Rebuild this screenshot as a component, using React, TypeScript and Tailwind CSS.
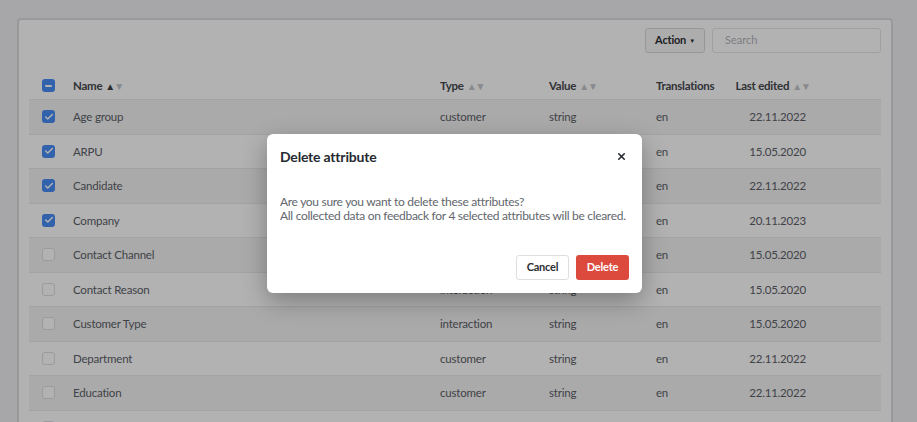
import { Check, X } from "lucide-react";

const rows = [
  { name: "Age group", type: "customer", value: "string", tr: "en", date: "22.11.2022", checked: true },
  { name: "ARPU", type: "customer", value: "number", tr: "en", date: "15.05.2020", checked: true },
  { name: "Candidate", type: "customer", value: "string", tr: "en", date: "22.11.2022", checked: true },
  { name: "Company", type: "customer", value: "string", tr: "en", date: "20.11.2023", checked: true },
  { name: "Contact Channel", type: "interaction", value: "string", tr: "en", date: "15.05.2020", checked: false },
  { name: "Contact Reason", type: "interaction", value: "string", tr: "en", date: "15.05.2020", checked: false },
  { name: "Customer Type", type: "interaction", value: "string", tr: "en", date: "15.05.2020", checked: false },
  { name: "Department", type: "customer", value: "string", tr: "en", date: "22.11.2022", checked: false },
  { name: "Education", type: "customer", value: "string", tr: "en", date: "22.11.2022", checked: false },
  { name: "Gender", type: "customer", value: "string", tr: "en", date: "22.11.2022", checked: false },
];

const cols = "grid grid-cols-[44px_367px_109px_107px_82px_72px_1fr] items-center";

function Sort({ active }: { active?: boolean }) {
  return (
    <span className="ml-[3px] inline-flex items-center text-[10px] leading-none tracking-[-1px]">
      <span className={active ? "text-[#3d4046]" : "text-[#c4c6ca]"}>▲</span>
      <span className="text-[#c4c6ca]">▼</span>
    </span>
  );
}

function Box({ checked }: { checked: boolean }) {
  if (checked)
    return (
      <span className="flex h-[13px] w-[13px] items-center justify-center rounded-[3px] bg-[#4a8df8]">
        <Check size={10} strokeWidth={3.5} className="text-white" />
      </span>
    );
  return <span className="block h-[13px] w-[13px] rounded-[3px] border border-[#dcdee2] bg-white" />;
}

export default function App() {
  return (
    <div
      className="relative h-[422px] w-[917px] overflow-hidden bg-[#eff0f4] pl-[17px] pr-[24px] pt-[18px]"
      style={{ fontFamily: "Lato, 'Open Sans', sans-serif" }}
    >
      <div className="h-[420px] overflow-hidden rounded-[4px] border-2 border-[#d9dbde] bg-white px-[10px] pt-[8px]">
        <div className="flex justify-end gap-[7px]">
          <button className="flex h-[25px] w-[60px] items-center justify-center gap-[3px] rounded-[3px] border border-[#d6d8dc] bg-[#f8f8f9] text-[11px] font-bold tracking-[-0.2px] text-[#2b2e33]">
            Action <span className="text-[6px]">▼</span>
          </button>
          <div className="flex h-[25px] w-[169px] items-center rounded-[3px] border border-[#e3e5e8] bg-white px-[12px] text-[11px] text-[#b3b6bb]">
            Search
          </div>
        </div>

        <div className={`${cols} mt-[19px] h-[28px] border-b border-[#e8e9eb] text-[11.5px] font-bold tracking-[-0.25px] text-[#45484e]`}>
          <div className="pl-[13px]">
            <span className="flex h-[13px] w-[13px] items-center justify-center rounded-[3px] bg-[#4a8df8]">
              <span className="h-[2px] w-[7px] rounded bg-white" />
            </span>
          </div>
          <div className="flex items-center">Name<Sort active /></div>
          <div className="flex items-center">Type<Sort /></div>
          <div className="flex items-center">Value<Sort /></div>
          <div>Translations</div>
          <div className="flex items-center justify-end whitespace-nowrap">Last edited<Sort /></div>
          <div />
        </div>

        {rows.map((r, i) => (
          <div
            key={r.name}
            className={`${cols} h-[34.5px] border-b border-[#e9eaec] text-[11.5px] tracking-[-0.2px] text-[#5c6067] ${i % 2 === 0 ? "bg-[#f4f4f5]" : "bg-white"}`}
          >
            <div className="pl-[13px]"><Box checked={r.checked} /></div>
            <div>{r.name}</div>
            <div>{r.type}</div>
            <div>{r.value}</div>
            <div>{r.tr}</div>
            <div className="pr-[4px] text-right">{r.date}</div>
            <div />
          </div>
        ))}
      </div>

      <div className="absolute inset-0 bg-black/30" />

      <div className="absolute left-[267px] top-[134px] flex h-[159px] w-[375px] flex-col rounded-[6px] bg-white px-[13px] shadow-[0_8px_24px_rgba(0,0,0,0.3)]">
        <div className="mt-[12px] flex items-center justify-between">
          <h2 className="text-[14px] font-bold tracking-[-0.2px] text-[#262a31]">Delete attribute</h2>
          <X size={11} strokeWidth={3.5} className="mr-[2px] text-[#262a31]" />
        </div>
        <p className="mt-[28px] whitespace-nowrap text-[12px] leading-[14px] tracking-[-0.3px] text-[#62666d]">
          Are you sure you want to delete these attributes?
          <br />
          All collected data on feedback for 4 selected attributes will be cleared.
        </p>
        <div className="mt-auto mb-[13px] flex justify-end gap-[7px]">
          <button className="h-[25px] w-[53px] rounded-[3px] border border-[#dcdee2] bg-white text-[11px] font-bold tracking-[-0.2px] text-[#2b2e33]">
            Cancel
          </button>
          <button className="h-[25px] w-[53px] rounded-[3px] bg-[#dc4a3d] text-[11px] font-bold tracking-[-0.2px] text-white">
            Delete
          </button>
        </div>
      </div>
    </div>
  );
}
